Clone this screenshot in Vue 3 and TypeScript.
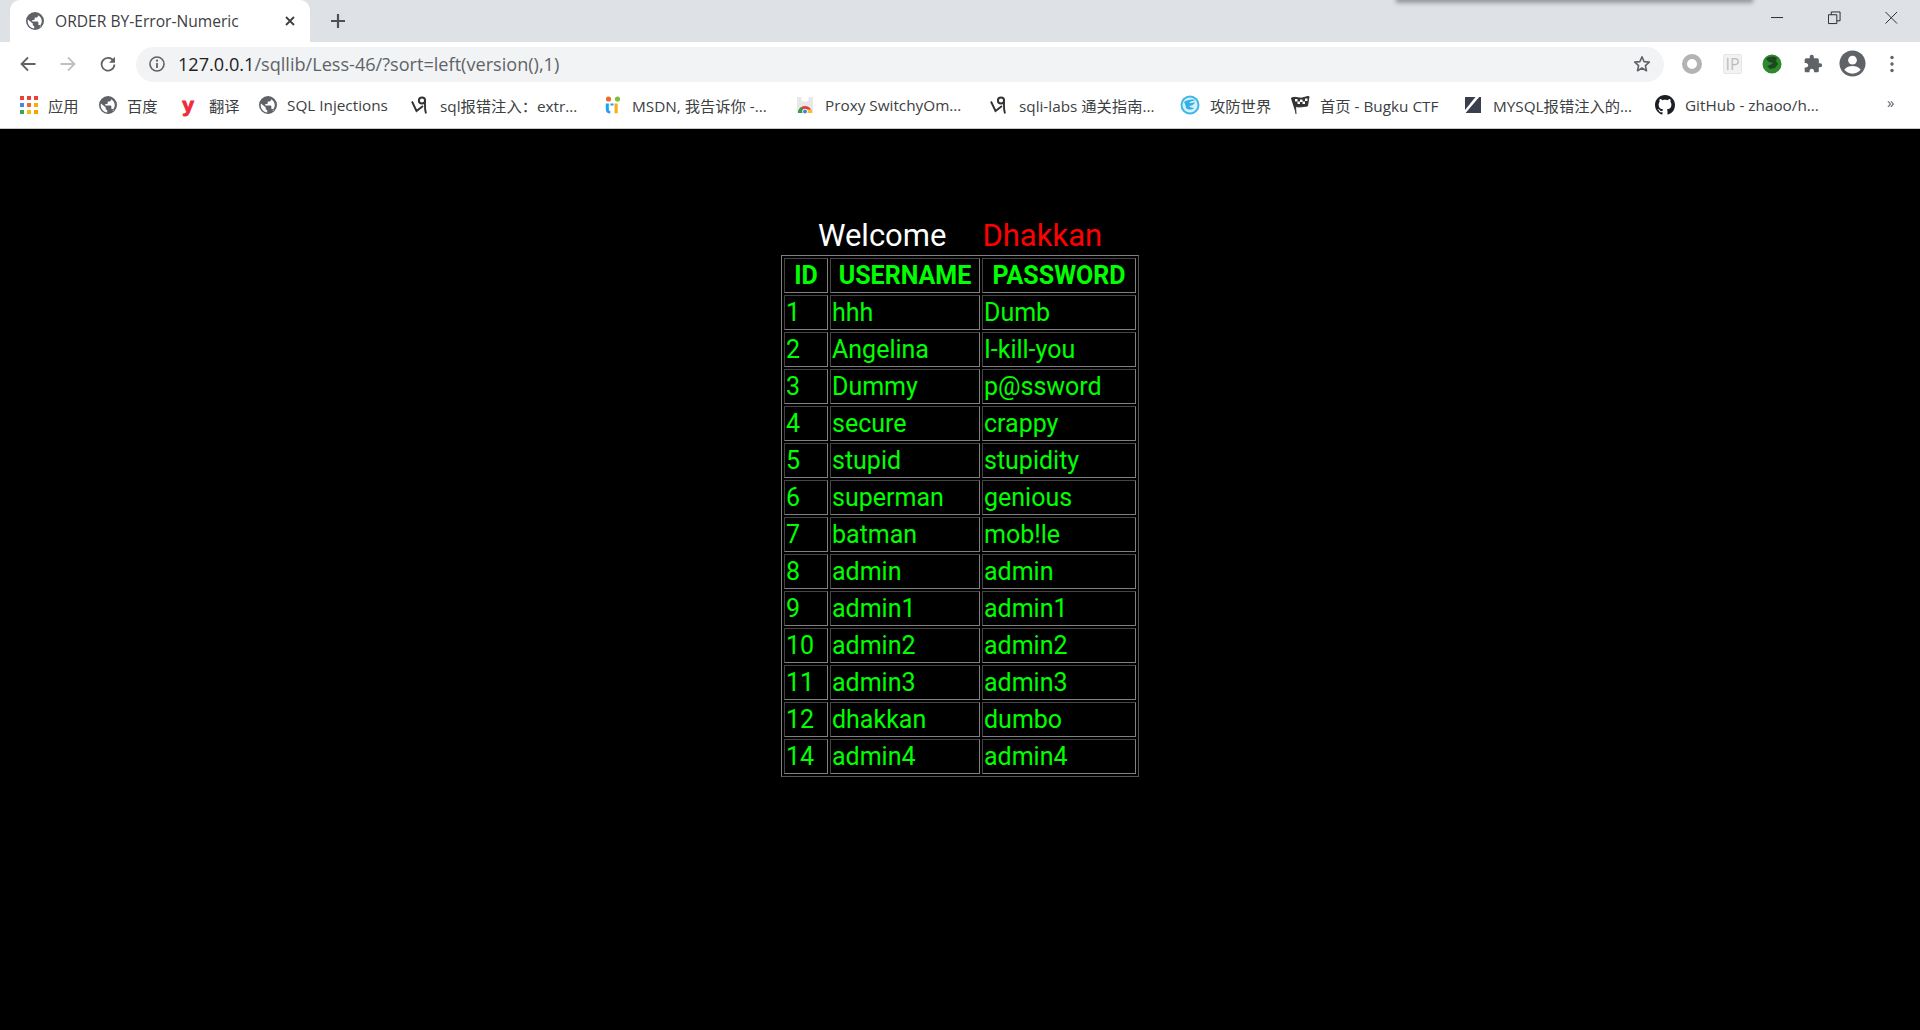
<script setup lang="ts">
interface Bookmark { icon: string; label: string; width: number }
const bookmarks: Bookmark[] = [
  { icon: 'apps', label: '应用', width: 79 },
  { icon: 'globe', label: '百度', width: 82 },
  { icon: 'youdao', label: '翻译', width: 78 },
  { icon: 'globe', label: 'SQL Injections', width: 152 },
  { icon: 'sqli', label: 'sql报错注入：extr...', width: 193 },
  { icon: 'msdn', label: 'MSDN, 我告诉你 -...', width: 192 },
  { icon: 'store', label: 'Proxy SwitchyOm...', width: 194 },
  { icon: 'sqli', label: 'sqli-labs 通关指南...', width: 190 },
  { icon: 'world', label: '攻防世界', width: 110 },
  { icon: 'flag', label: '首页 - Bugku CTF', width: 174 },
  { icon: 'zhi', label: 'MYSQL报错注入的...', width: 191 },
  { icon: 'github', label: 'GitHub - zhaoo/h...', width: 200 },
]
const rows: [number, string, string][] = [
  [1, 'hhh', 'Dumb'],
  [2, 'Angelina', 'I-kill-you'],
  [3, 'Dummy', 'p@ssword'],
  [4, 'secure', 'crappy'],
  [5, 'stupid', 'stupidity'],
  [6, 'superman', 'genious'],
  [7, 'batman', 'mob!le'],
  [8, 'admin', 'admin'],
  [9, 'admin1', 'admin1'],
  [10, 'admin2', 'admin2'],
  [11, 'admin3', 'admin3'],
  [12, 'dhakkan', 'dumbo'],
  [14, 'admin4', 'admin4'],
]
const appColors = ['#ea4335', '#ea4335', '#ea4335', '#4285f4', '#ea6a35', '#fbac05', '#34a853', '#fbbc05', '#f9a205']
const globePath = 'M8 0a8 8 0 1 0 0 16A8 8 0 0 0 8 0zM1.7 6.7 6 10.2v.8c0 .8.6 1.4 1.3 1.4v2.2C4 14.3 1.5 11.4 1.5 8c0-.5.1-.9.2-1.3zm11.5 6.1c-.2-.7-.8-1.2-1.5-1.2h-.7V9.2c0-.4-.3-.7-.7-.7H5.6V7h1.5c.4 0 .7-.3.7-.7V4.9h1.4c.8 0 1.4-.6 1.4-1.4v-.6c2 .9 3.4 2.8 3.4 5.1 0 1.8-.8 3.4-2 4.8z'
</script>

<template>
  <div class="window">
    <header class="tabstrip">
      <div class="tab">
        <svg class="tab-icon" viewBox="0 0 16 16"><path fill="#5f6368" fill-rule="evenodd" :d="globePath" /></svg>
        <span class="tab-title">ORDER BY-Error-Numeric</span>
        <svg class="tab-close" viewBox="0 0 10 10"><path d="M1 1l8 8M9 1L1 9" stroke="#3c4043" stroke-width="1.8" fill="none" /></svg>
      </div>
      <svg class="new-tab" viewBox="0 0 16 16"><path d="M8 1v14M1 8h14" stroke="#4d5156" stroke-width="2.2" fill="none" /></svg>
      <div class="notice-shadow"></div>
      <div class="win-controls">
        <svg class="win-btn" viewBox="0 0 14 14"><path d="M0 6.5h13" stroke="#222" fill="none" /></svg>
        <svg class="win-btn" viewBox="0 0 14 14"><path d="M.5 3.5h9v9.500h-9zM3.500 3.500v-3h9.500v9.500h-3.500" stroke="#222" fill="none" /></svg>
        <svg class="win-btn" viewBox="0 0 14 14"><path d="M.5.5l12.500 12.500M13 .5L.5 13" stroke="#222" fill="none" /></svg>
      </div>
    </header>

    <nav class="toolbar">
      <svg class="nav-icon" viewBox="0 0 16 16"><path d="M15.500 8H1.500M8 1.500L1.500 8 8 14.500" stroke="#5f6368" stroke-width="1.800" fill="none" /></svg>
      <svg class="nav-icon" viewBox="0 0 16 16"><path d="M.5 8h14M8 1.500L14.500 8 8 14.500" stroke="#bdc1c6" stroke-width="1.800" fill="none" /></svg>
      <svg class="nav-icon" viewBox="0 0 16 16"><path d="M13.500 5A6.400 6.400 0 1 0 14.400 8.500" stroke="#5f6368" stroke-width="1.800" fill="none" /><path d="M15 .8v6h-6z" fill="#5f6368" /></svg>
      <div class="omnibox">
        <svg class="info" viewBox="0 0 16 16"><circle cx="8" cy="8" r="7" stroke="#5f6368" stroke-width="1.600" fill="none" /><path d="M8 7v5" stroke="#5f6368" stroke-width="1.800" /><circle cx="8" cy="4.700" r="1.100" fill="#5f6368" /></svg>
        <span class="url"><span class="host">127.0.0.1</span>/sqllib/Less-46/?sort=left(version(),1)</span>
        <svg class="star" viewBox="0 0 18 18"><path d="M9 1.800l2.100 4.800 5.200.5-3.900 3.500 1.100 5.100L9 13l-4.500 2.700 1.100-5.100L1.700 7.100l5.200-.5z" stroke="#5f6368" stroke-width="1.600" fill="none" stroke-linejoin="round" /></svg>
      </div>
      <div class="extensions">
        <svg class="ext" viewBox="0 0 20 20"><circle cx="10" cy="10" r="7.500" stroke="#b3b3b3" stroke-width="5" fill="none" /></svg>
        <span class="ip">IP</span>
        <svg class="ext" viewBox="0 0 20 20"><circle cx="10" cy="10" r="9.500" fill="#2f8a2f" /><path d="M4 5c3-3 8-3 11-1l-1 3 2 3-3 4-5 1-3-3 3-1 3-2-4-1z" fill="#1c4a1e" /></svg>
        <svg class="ext" viewBox="0 0 24 24"><path fill="#5f6368" d="M20.500 11H19V7c0-1.100-.9-2-2-2h-4V3.500a2.500 2.500 0 0 0-5 0V5H4c-1.100 0-2 .9-2 2v3.800h1.500c1.500 0 2.700 1.200 2.700 2.700S5 16.200 3.500 16.200H2V20c0 1.100.9 2 2 2h3.800v-1.500c0-1.500 1.200-2.700 2.700-2.700s2.700 1.200 2.700 2.700V22H17c1.100 0 2-.9 2-2v-4h1.500a2.500 2.500 0 0 0 0-5z" /></svg>
        <svg class="avatar" viewBox="0 0 28 28"><circle cx="14" cy="14" r="13.500" fill="#5f6368" /><circle cx="14" cy="10.500" r="4.500" fill="#fff" /><path d="M5.500 20.500c2-3 5.500-4 8.500-4s6.500 1 8.500 4c-2 2.500-5 4-8.500 4s-6.500-1.500-8.500-4z" fill="#fff" /></svg>
        <svg class="menu" viewBox="0 0 4 18"><circle cx="2" cy="2.500" r="1.700" fill="#5f6368" /><circle cx="2" cy="9" r="1.700" fill="#5f6368" /><circle cx="2" cy="15.500" r="1.700" fill="#5f6368" /></svg>
      </div>
    </nav>

    <nav class="bookmarks">
      <div v-for="b in bookmarks" :key="b.label" class="bookmark" :style="{ width: b.width + 'px' }">
        <span v-if="b.icon === 'apps'" class="apps">
          <i v-for="(c, i) in appColors" :key="i" :style="{ background: c }"></i>
        </span>
        <svg v-else-if="b.icon === 'globe'" class="bm-icon" viewBox="0 0 16 16"><path fill="#5f6368" fill-rule="evenodd" :d="globePath" /></svg>
        <span v-else-if="b.icon === 'youdao'" class="youdao">y</span>
        <svg v-else-if="b.icon === 'sqli'" class="bm-icon wide" viewBox="0 0 18 18"><circle cx="11" cy="4.500" r="3.100" stroke="#333" stroke-width="2" fill="none" /><path d="M14 5c0 5-.5 8 1 12.500M1 5.500l4.500 9.500L12 10" stroke="#333" stroke-width="1.900" fill="none" /></svg>
        <svg v-else-if="b.icon === 'msdn'" class="bm-icon" viewBox="0 0 18 18"><circle cx="4.500" cy="3" r="2.600" fill="#ef6a2a" /><circle cx="13.500" cy="3" r="2.600" fill="#7fbf3a" /><path d="M1.800 7.500h3v6c0 1.200.6 1.600 1.500 1.600v2.400c-2.800 0-4.500-1.300-4.500-4z" fill="#1da1f2" /><path d="M10.500 7.500h3.200v9.800h-3.200z" fill="#f6b01e" /><path d="M6.500 7.500h3v2h-3z" fill="#1da1f2" /></svg>
        <svg v-else-if="b.icon === 'store'" class="bm-icon wide" viewBox="0 0 18 18"><path d="M1 1h16v16H1z" fill="#e8e8e8" /><path d="M5.500 1v3c0 2 7 2 7 0V1z" fill="#fff" /><path d="M2 17a7 7 0 0 1 14 0z" fill="#e53935" /><path d="M2 17a7 7 0 0 1 3.500-6l3.500 6z" fill="#2e9e4f" /><path d="M16 17a7 7 0 0 0-1-3.500H9L9 17z" fill="#f7c325" /><circle cx="9" cy="15.500" r="2.800" fill="#fff" /><circle cx="9" cy="15.500" r="2" fill="#4a80e8" /></svg>
        <svg v-else-if="b.icon === 'world'" class="bm-icon large" viewBox="0 0 20 20"><circle cx="10" cy="10" r="9.500" fill="#3fb8e8" /><circle cx="10" cy="10" r="7.500" fill="#d4f0fa" /><path d="M4 7c3-2 8-3 11-2-2 1-5 1.500-6 3 2 0 4 0 6-1-1 3-4 4-6 4 1 1 3 2 5 2-2 2-6 2-8 0 0-2-1-4-2-6z" fill="#33b0e4" /></svg>
        <svg v-else-if="b.icon === 'flag'" class="bm-icon large" viewBox="0 0 20 20"><path d="M1 3.500c4-3 8 1 13-1 2-.7 4-1 5-1l-1.500 9.500c-4 .5-8 1.500-12 .5L6 19" fill="#333" stroke="#333" stroke-width="1" /><path d="M5 4h2.500v2.500H5zM10 4.500h2.500V7H10zM15 3.500h2.500V6H15zM7.500 6.500H10V9H7.500zM12.500 6.500H15V9h-2.500z" fill="#fff" /></svg>
        <svg v-else-if="b.icon === 'zhi'" class="bm-icon wide" viewBox="0 0 18 18"><path d="M1 1h10.500L1 14z" fill="#3a3f4f" /><path d="M1 17 15 1h2v16z" fill="#3a3f4f" /><path d="M12.500 1 1 15v2h.5L15 1z" fill="#fff" /></svg>
        <svg v-else-if="b.icon === 'github'" class="bm-icon large" viewBox="0 0 16 16"><path fill="#1b1f23" d="M8 0C3.580 0 0 3.580 0 8c0 3.540 2.290 6.530 5.470 7.590.4.070.55-.17.55-.38 0-.19-.010-.82-.010-1.490-2.010.37-2.530-.49-2.690-.94-.090-.23-.480-.94-.820-1.130-.280-.150-.680-.520-.010-.530.630-.010 1.080.580 1.230.820.720 1.210 1.870.870 2.330.660.070-.520.280-.870.510-1.070-1.780-.200-3.640-.890-3.640-3.950 0-.870.310-1.590.820-2.150-.080-.200-.360-1.020.080-2.120 0 0 .670-.210 2.200.820.640-.180 1.320-.270 2-.270s1.360.090 2 .270c1.530-1.040 2.200-.820 2.200-.820.440 1.100.160 1.920.080 2.120.510.560.820 1.270.820 2.150 0 3.070-1.870 3.750-3.650 3.950.290.250.540.730.540 1.480 0 1.070-.010 1.930-.010 2.200 0 .210.150.460.550.380A8.010 8.010 0 0 0 16 8c0-4.420-3.580-8-8-8z" /></svg>
        <span class="bm-label">{{ b.label }}</span>
      </div>
      <span class="more">»</span>
    </nav>

    <main class="page">
      <div class="greeting"><span class="welcome">Welcome</span><span class="name">Dhakkan</span></div>
      <table class="users">
        <thead>
          <tr><th class="c-id">ID</th><th class="c-user">USERNAME</th><th class="c-pass">PASSWORD</th></tr>
        </thead>
        <tbody>
          <tr v-for="r in rows" :key="r[0]"><td>{{ r[0] }}</td><td>{{ r[1] }}</td><td>{{ r[2] }}</td></tr>
        </tbody>
      </table>
    </main>
  </div>
</template>

<style>
html, body { background: #000; overflow: hidden; }
</style>

<style scoped>
.window {
  height: 1030px;
  display: flex;
  flex-direction: column;
  background: #000;
  font-family: "Open Sans", "Noto Sans CJK SC", sans-serif;
  overflow: hidden;
}
.tabstrip {
  height: 42px;
  background: #dee1e6;
  display: flex;
  align-items: flex-end;
  position: relative;
  padding-left: 10px;
  flex: none;
}
.tab {
  width: 300px;
  height: 42px;
  background: #fff;
  border-radius: 10px 10px 0 0;
  display: flex;
  align-items: center;
  padding-left: 16px;
  box-sizing: border-box;
}
.tab-icon { width: 18px; height: 18px; flex: none; }
.tab-title { margin-left: 11px; font-size: 15.600px; color: #3c4043; width: 230px; white-space: nowrap; }
.tab-close { width: 10px; height: 10px; flex: none; }
.new-tab { width: 16px; height: 16px; margin: 0 0 13px 20px; flex: none; }
.notice-shadow {
  position: absolute;
  left: 1398px;
  top: -6px;
  width: 353px;
  height: 6px;
  box-shadow: 0 1px 4px 2px rgba(60, 64, 67, .45);
  background: #b0b3b8;
}
.win-controls {
  position: absolute;
  right: 22px;
  top: 11px;
  display: flex;
  gap: 44px;
}
.win-btn { width: 13px; height: 14px; }
.toolbar {
  height: 45px;
  background: #fff;
  display: flex;
  align-items: center;
  padding-left: 20px;
  flex: none;
  box-sizing: border-box;
}
.nav-icon { width: 16px; height: 16px; margin: 0 24px 2px 0; flex: none; }
.omnibox {
  width: 1528px;
  height: 35px;
  margin-left: -4px;
  background: #f1f3f4;
  border-radius: 18px;
  display: flex;
  align-items: center;
  padding: 0 13px;
  box-sizing: border-box;
  flex: none;
}
.info { width: 16px; height: 16px; flex: none; margin-bottom: 2px; }
.url { margin: 0 0 2px 13px; font-size: 18.120px; color: #5f6368; flex: 1; white-space: nowrap; }
.host { color: #202124; }
.star { width: 18px; height: 18px; flex: none; margin-bottom: 1px; }
.extensions { display: flex; align-items: center; margin: 0 0 2px 18px; }
.ext { width: 20px; height: 20px; flex: none; margin-right: 21px; }
.ip {
  width: 19px;
  height: 20px;
  margin-right: 20px;
  background: #f2f2f2;
  border: 1px solid #e6e6e6;
  border-radius: 2px;
  box-sizing: border-box;
  color: #bdbdbd;
  font-size: 16px;
  line-height: 18px;
  text-align: center;
}
.avatar { width: 27px; height: 27px; margin-left: -5px; flex: none; }
.menu { width: 4px; height: 18px; margin-left: 24px; flex: none; }
.bookmarks {
  height: 42px;
  background: #fff;
  border-bottom: 1px solid #c8c8c8;
  box-sizing: border-box;
  display: flex;
  align-items: center;
  padding: 0 0 5px 20px;
  position: relative;
  flex: none;
}
.bookmark { display: flex; align-items: center; flex: none; box-sizing: border-box; }
.bm-icon { width: 18px; height: 18px; flex: none; margin-right: 10px; }
.bm-icon.wide { margin-right: 11px; }
.bm-icon.large { width: 20px; height: 20px; }
.bm-label { font-size: 15.300px; color: #3c4043; white-space: nowrap; }
.apps {
  width: 18px;
  height: 18px;
  margin-right: 10px;
  display: grid;
  grid-template-columns: repeat(3, 4px);
  grid-auto-rows: 4px;
  gap: 3px;
  flex: none;
}
.youdao {
  width: 18px;
  margin: 0 10px 0 -2px;
  padding-right: 2px;
  color: #ef2b3a;
  font: 900 21px/18px "Liberation Sans", sans-serif;
  -webkit-text-stroke: 1px #ef2b3a;
  text-align: center;
  flex: none;
}
.more { position: absolute; left: 1887px; top: 5px; font-size: 15px; color: #5f6368; }
.page {
  flex: 1;
  display: flex;
  flex-direction: column;
  align-items: center;
  padding-top: 88px;
  font-family: Roboto, "Open Sans", sans-serif;
}
.greeting { font-size: 31px; line-height: 38px; height: 38px; white-space: nowrap; display: flex; gap: 36px; }
.welcome { color: #fff; }
.name { color: #f00; }
.users {
  border-collapse: separate;
  border-spacing: 2px;
  border: 1px solid;
  border-color: #808080 #555 #555 #808080;
  color: #0f0;
  font-size: 25px;
  table-layout: fixed;
  width: 358px;
  box-sizing: border-box;
}
.c-id { width: 44px; }
.c-user { width: 150px; }
.c-pass { width: 154px; }
.users th, .users td {
  height: 35px;
  box-sizing: border-box;
  padding: 0 1px;
  border: 1px solid;
  border-color: #444 #808080 #808080 #444;
  line-height: 33px;
  white-space: nowrap;
  overflow: hidden;
}
.users th { font-weight: 700; text-align: center; }
.users td { text-align: left; }
</style>
